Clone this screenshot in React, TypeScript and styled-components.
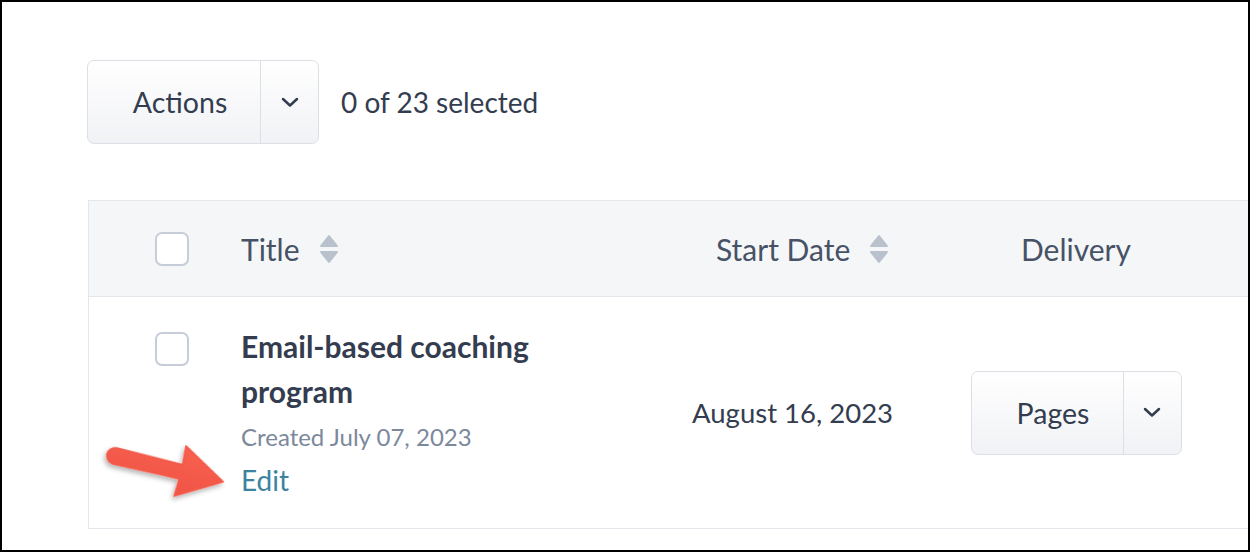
import React from "react";
import styled, { createGlobalStyle } from "styled-components";

const GlobalStyle = createGlobalStyle`
    body {
        margin: 0;
        background: #ffffff;
    }
    * {
        box-sizing: border-box;
    }
`;

const Frame = styled.div`
    position: relative;
    width: 1250px;
    height: 552px;
    border: 2px solid #000000;
    background: #ffffff;
    overflow: hidden;
    padding: 58px 0 0 85px;
    font-family: Lato, "Liberation Sans", sans-serif;
    color: #333d4f;
`;

const Toolbar = styled.div`
    display: flex;
    align-items: center;
    gap: 22px;
`;

const SelectedText = styled.span`
    font-size: 28px;
    color: #333d4f;
`;

const SplitButton = styled.div`
    display: flex;
    height: 84px;
    border: 1.5px solid #dcdfe6;
    border-radius: 7px;
    background: linear-gradient(#ffffff, #f1f2f5);
    overflow: hidden;
`;

const MainPart = styled.div<{ $width: number }>`
    width: ${({ $width }) => $width}px;
    display: flex;
    align-items: center;
    justify-content: center;
    padding-left: 12px;
    font-size: 28.5px;
    color: #333d4f;
    border-right: 1.5px solid #dcdfe6;
`;

const DropPart = styled.div`
    width: 57px;
    display: flex;
    align-items: center;
    justify-content: center;
`;

const Table = styled.div`
    width: 1200px;
    margin-top: 56px;
    margin-left: 1px;
    border-left: 1px solid #e3e6eb;
    border-top: 1.5px solid #e3e6eb;
`;

const Row = styled.div<{ $head?: boolean }>`
    display: grid;
    grid-template-columns: 152px 419px 280px 272px 1fr;
    align-items: center;
    background: ${({ $head }) => ($head ? "#f5f6f8" : "#ffffff")};
    height: ${({ $head }) => ($head ? "96px" : "232px")};
    border-bottom: 1.5px solid #e3e6eb;
`;

const CheckCell = styled.div<{ $top?: boolean }>`
    padding-left: 66px;
    align-self: ${({ $top }) => ($top ? "start" : "center")};
    padding-top: ${({ $top }) => ($top ? "35px" : "0")};
`;

const Checkbox = styled.div`
    width: 34px;
    height: 34px;
    border: 2px solid #c6cdd9;
    border-radius: 7px;
    background: #ffffff;
`;

const HeadCell = styled.div<{ $pad?: number; $center?: boolean }>`
    display: flex;
    align-items: center;
    justify-content: ${({ $center }) => ($center ? "center" : "flex-start")};
    gap: 19px;
    padding-left: ${({ $pad }) => $pad ?? 0}px;
    font-size: 30px;
    color: #475266;
`;

const TitleBlock = styled.div`
    display: flex;
    flex-direction: column;
`;

const TitleText = styled.div`
    font-size: 30px;
    font-weight: 700;
    line-height: 45px;
    color: #333d4f;
    width: 310px;
`;

const Created = styled.div`
    font-size: 24px;
    line-height: 45px;
    color: #7c889c;
`;

const EditLink = styled.a`
    font-size: 28px;
    line-height: 43px;
    color: #3d83a0;
    text-decoration: none;
`;

const DateCell = styled.div`
    padding-left: 32px;
    font-size: 27.5px;
    color: #333d4f;
`;

const DeliveryCell = styled.div`
    display: flex;
    justify-content: center;
`;

const ArrowSvg = styled.svg`
    position: absolute;
    left: 88px;
    top: 425px;
    overflow: visible;
`;

const Chevron = () => (
    <svg width="18" height="11" viewBox="0 0 18 11">
        <path d="M2 2 L9 8.5 L16 2" fill="none" stroke="#333d4f" strokeWidth="2.5" strokeLinecap="round" strokeLinejoin="round" />
    </svg>
);

const SortIcon = () => (
    <svg width="20" height="30" viewBox="0 0 20 30">
        <path d="M10 2 L18 12 L2 12 Z" fill="#b9c1cd" stroke="#b9c1cd" strokeWidth="2" strokeLinejoin="round" />
        <path d="M2 18 L18 18 L10 28 Z" fill="#b9c1cd" stroke="#b9c1cd" strokeWidth="2" strokeLinejoin="round" />
    </svg>
);

const RedArrow = () => (
    <ArrowSvg width="150" height="90" viewBox="0 0 150 90">
        <defs>
            <filter id="arrowShadow" x="-20%" y="-40%" width="140%" height="180%">
                <feDropShadow dx="-1" dy="3" stdDeviation="2.5" floodColor="#000" floodOpacity="0.3" />
            </filter>
            <linearGradient id="arrowFill" x1="0" y1="0" x2="0" y2="1">
                <stop offset="0" stopColor="#f8604f" />
                <stop offset="1" stopColor="#f05445" />
            </linearGradient>
        </defs>
        <g transform="translate(25 29) rotate(13.4)" filter="url(#arrowShadow)">
            <path
                d="M0 -8 L68 -7 L67 -26 L111 0 L67 25 L68 7 L0 8 A8 8 0 0 1 0 -8 Z"
                fill="url(#arrowFill)"
                stroke="#f35a4a"
                strokeWidth="2"
                strokeLinejoin="round"
            />
        </g>
    </ArrowSvg>
);

export default function App() {
    return (
        <>
            <GlobalStyle />
            <Frame>
                <Toolbar>
                    <SplitButton>
                        <MainPart $width={173}>Actions</MainPart>
                        <DropPart>
                            <Chevron />
                        </DropPart>
                    </SplitButton>
                    <SelectedText>0 of 23 selected</SelectedText>
                </Toolbar>

                <Table>
                    <Row $head>
                        <CheckCell>
                            <Checkbox />
                        </CheckCell>
                        <HeadCell>
                            Title
                            <SortIcon />
                        </HeadCell>
                        <HeadCell $pad={56}>
                            Start Date
                            <SortIcon />
                        </HeadCell>
                        <HeadCell $center>Delivery</HeadCell>
                        <div />
                    </Row>
                    <Row>
                        <CheckCell $top>
                            <Checkbox />
                        </CheckCell>
                        <TitleBlock>
                            <TitleText>Email-based coaching program</TitleText>
                            <Created>Created July 07, 2023</Created>
                            <EditLink href="#">Edit</EditLink>
                        </TitleBlock>
                        <DateCell>August 16, 2023</DateCell>
                        <DeliveryCell>
                            <SplitButton>
                                <MainPart $width={152}>Pages</MainPart>
                                <DropPart>
                                    <Chevron />
                                </DropPart>
                            </SplitButton>
                        </DeliveryCell>
                        <div />
                    </Row>
                </Table>

                <RedArrow />
            </Frame>
        </>
    );
}
